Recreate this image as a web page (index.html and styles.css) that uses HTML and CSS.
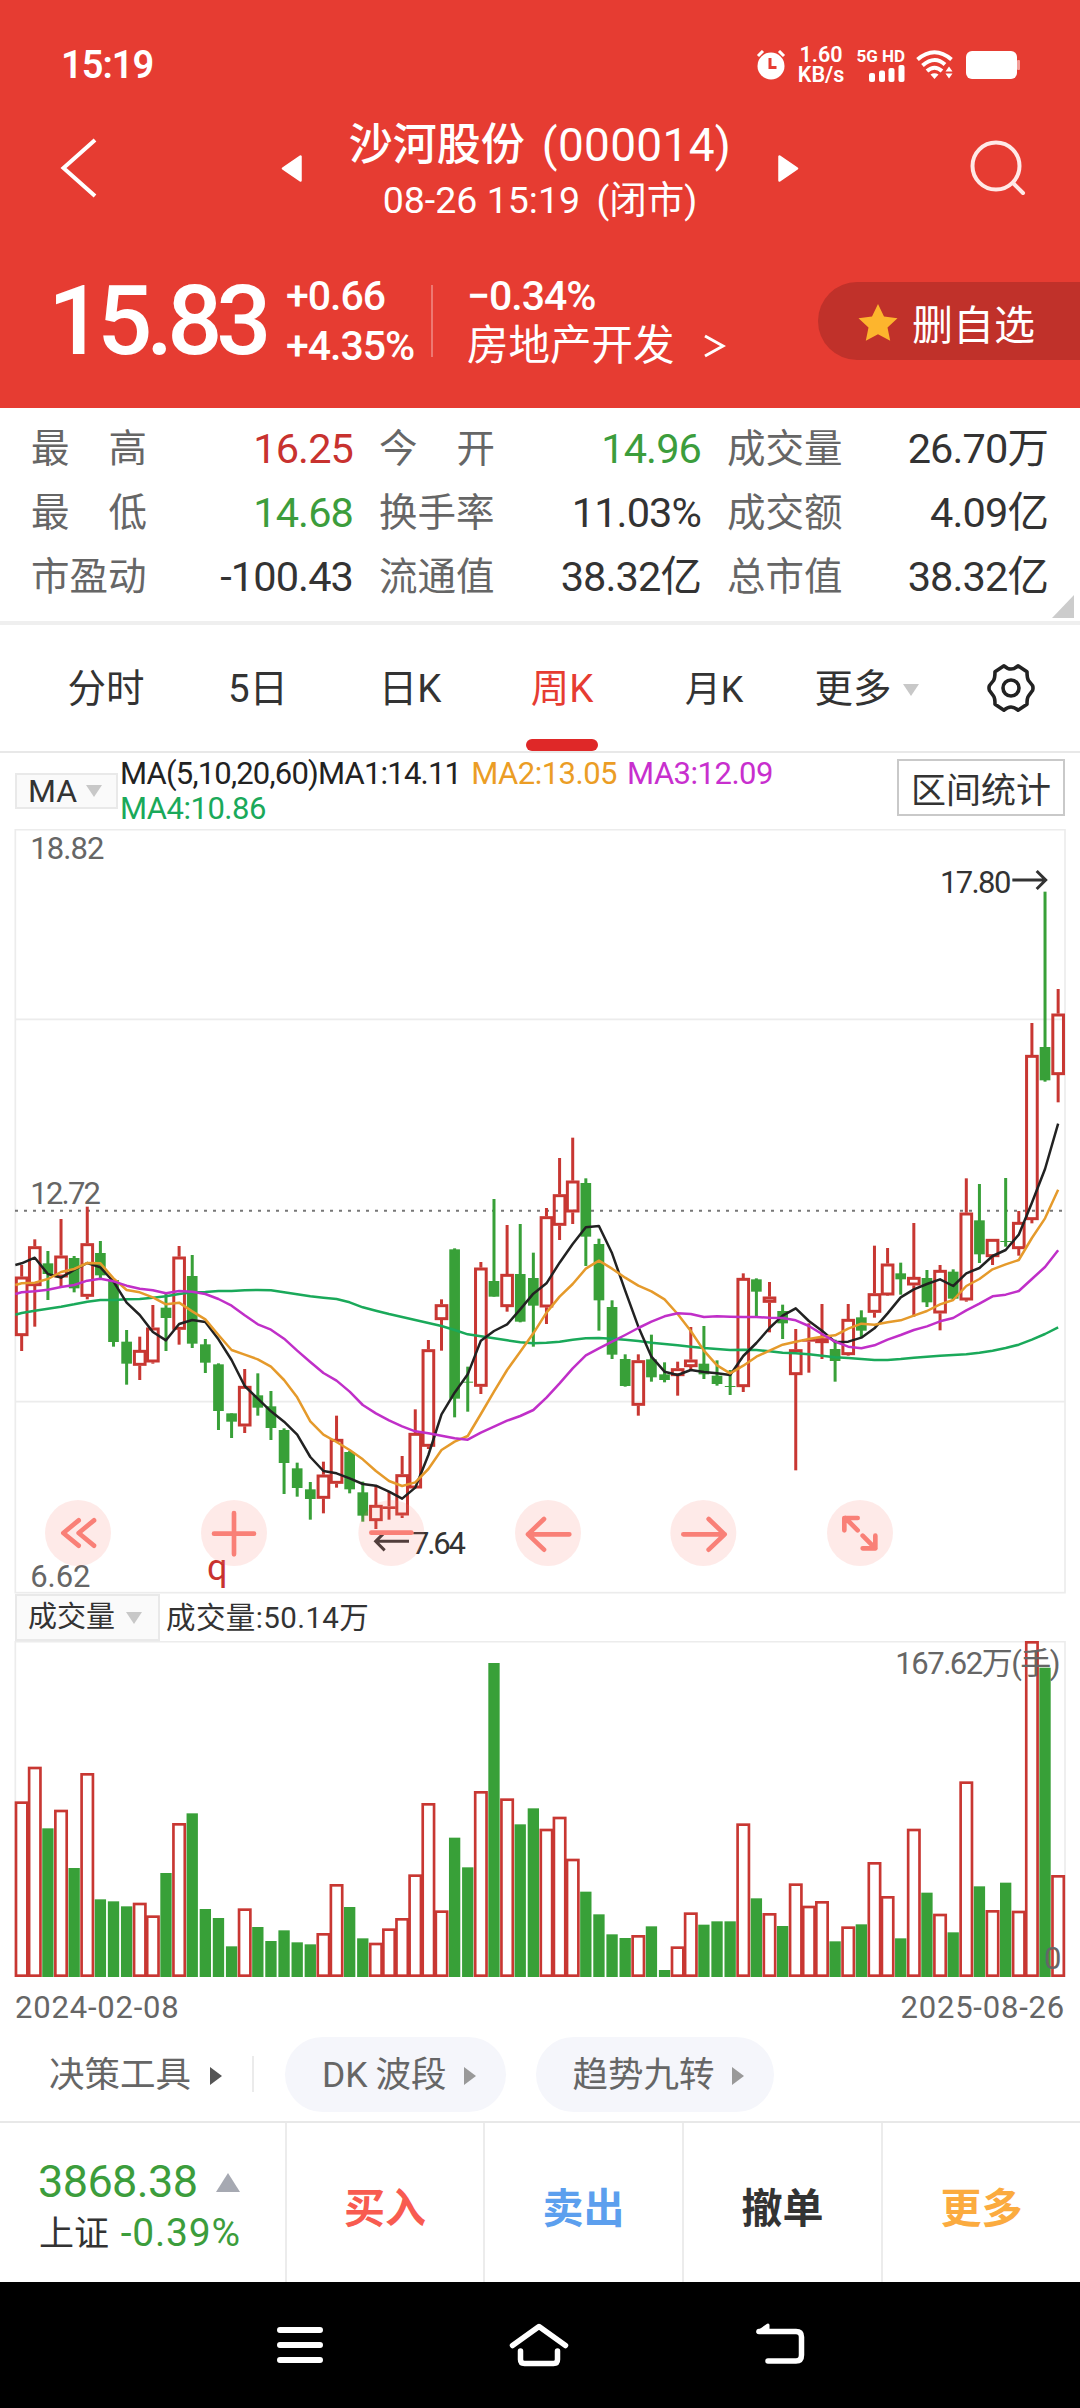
FILE: index.html
```html
<!DOCTYPE html>
<html lang="zh-CN">
<head>
    <meta charset="UTF-8">
    <title>沙河股份 (000014)</title>
    <link rel="stylesheet" href="styles.css">
</head>
<body>
    <header class="header">
        <div class="status-bar">
            <span class="clock">15:19</span>
            <div class="status-icons">
                <svg class="alarm" width="30" height="30" viewBox="0 0 30 30">
                    <circle cx="15" cy="16" r="13.5" fill="#fff"/>
                    <path d="M2 6l5-5M28 6l-5-5" stroke="#fff" stroke-width="3"/>
                    <path d="M14 8v9.500h6.500" fill="none" stroke="#e63c32" stroke-width="3"/>
                </svg>
                <div class="speed"><span>1.60</span><span>KB/s</span></div>
                <div class="signal">
                    <span>5G HD</span>
                    <svg width="36" height="17" viewBox="0 0 36 17" fill="#fff">
                        <rect x="0" y="8" width="6" height="9" rx="2"/>
                        <rect x="10" y="5.500" width="6" height="11.500" rx="2"/>
                        <rect x="19.500" y="3" width="6" height="14" rx="2"/>
                        <rect x="29.500" y="0" width="6" height="17" rx="2"/>
                    </svg>
                </div>
                <svg class="wifi" width="38" height="30" viewBox="0 0 38 30" fill="none" stroke="#fff" stroke-width="4">
                    <path d="M1.500 9.500Q18.500-5 35.500 9.500"/>
                    <path d="M6.500 15.500Q18.500 5 29 14.500"/>
                    <path d="M11 21Q18.500 14.500 26 21"/>
                    <path d="M14.500 24.500q4-2.500 8 0l-4 4.500z" fill="#fff" stroke="none"/>
                    <path d="M29.500 21.500l3.500-5 3.500 5zM29.500 23.500l3.500 5 3.500-5z" fill="#fff" stroke="none"/>
                </svg>
                <svg class="battery" width="54" height="28" viewBox="0 0 54 28" fill="#fff">
                    <rect x="0" y="0" width="51" height="28" rx="6"/>
                    <rect x="51" y="9" width="3" height="10" rx="1" opacity=".5"/>
                </svg>
            </div>
        </div>

        <div class="title-bar">
            <svg class="back" width="38" height="62" viewBox="0 0 38 62"><path d="M35 3L3.500 31 35 59" fill="none" stroke="#fff" stroke-width="4"/></svg>
            <svg class="prev" width="21" height="27" viewBox="0 0 21 27"><path d="M19.500 1.500v24L2 13.500z" fill="#fff" stroke="#fff" stroke-width="2.500" stroke-linejoin="round"/></svg>
            <div class="title">
                <h1><b>沙河股份</b><span>(000014)</span></h1>
                <p>08-26 15:19 <span>(闭市)</span></p>
            </div>
            <svg class="next" width="21" height="27" viewBox="0 0 21 27"><path d="M1.500 1.500v24L19 13.500z" fill="#fff" stroke="#fff" stroke-width="2.500" stroke-linejoin="round"/></svg>
            <svg class="search" width="56" height="56" viewBox="0 0 56 56" fill="none" stroke="#ffe9e7" stroke-width="4"><circle cx="26" cy="26" r="23.500"/><path d="M43.500 43.500l9.500 9.500" stroke-linecap="round"/></svg>
        </div>

        <div class="quote">
            <span class="price">15.83</span>
            <div class="change"><span>+0.66</span><span>+4.35%</span></div>
            <div class="sector">
                <span class="sector-change">−0.34%</span>
                <span class="sector-name">房地产开发<svg width="22" height="24" viewBox="0 0 22 24"><path d="M1 2l18 10L1 22" fill="none" stroke="#fff" stroke-width="3"/></svg></span>
            </div>
            <button class="favorite">
                <svg width="40" height="38" viewBox="0 0 40 38"><path d="M20 1l6 12.500 13.500 1.700-10 9.400 2.700 13.200L20 31.300 7.800 37.800l2.700-13.200-10-9.400L14 13.500z" fill="#fdb52d"/></svg>
                删自选
            </button>
        </div>
    </header>

    <section class="stats">
        <div class="stat"><span class="label"><i>最</i><i>高</i></span><span class="value up">16.25</span></div>
        <div class="stat"><span class="label"><i>今</i><i>开</i></span><span class="value down">14.96</span></div>
        <div class="stat"><span class="label">成交量</span><span class="value">26.70万</span></div>
        <div class="stat"><span class="label"><i>最</i><i>低</i></span><span class="value down">14.68</span></div>
        <div class="stat"><span class="label">换手率</span><span class="value">11.03%</span></div>
        <div class="stat"><span class="label">成交额</span><span class="value">4.09亿</span></div>
        <div class="stat"><span class="label">市盈动</span><span class="value">-100.43</span></div>
        <div class="stat"><span class="label">流通值</span><span class="value">38.32亿</span></div>
        <div class="stat"><span class="label">总市值</span><span class="value">38.32亿</span></div>
        <span class="corner"></span>
    </section>

    <nav class="tabs">
        <a>分时</a>
        <a>5日</a>
        <a>日K</a>
        <a class="active">周K</a>
        <a class="small">月K</a>
        <a class="more">更多<span class="caret"></span></a>
        <a class="settings">
            <svg width="52" height="52" viewBox="0 0 52 52" fill="none" stroke="#222" stroke-width="3.600" stroke-linejoin="round">
                <path d="M19 3.800Q22.500 7 26 7T33 3.800L42 9.800Q42 16 43.500 18.500L47.500 23.500Q48.500 26 47.500 28.500L43.500 34Q42 36 42 42.200L33 48.200Q29.500 45 26 45T19 48.200L10 42.200Q10 36 8.500 34L4.500 28.500Q3.500 26 4.500 23.500L8.500 18.500Q10 16 10 9.800Z"/>
                <circle cx="26" cy="26" r="8"/>
            </svg>
        </a>
    </nav>

    <section class="indicator">
        <div class="select ma-select">MA<span class="caret"></span></div>
        <div class="ma-values">
            <div><span class="ma1">MA(5,10,20,60)MA1:14.11</span><span class="ma2">MA2:13.05</span><span class="ma3">MA3:12.09</span></div>
            <div><span class="ma4">MA4:10.86</span></div>
        </div>
        <button class="range-btn">区间统计</button>
    </section>

    <section class="kline">
        <svg id="kline" width="1080" height="765" viewBox="0 0 3240 2295"></svg>
    </section>

    <section class="volume-head">
        <div class="select">成交量<span class="caret"></span></div>
        <span class="volume-value">成交量:50.14万</span>
    </section>
    <section class="volume">
        <svg id="volume" width="1080" height="337" viewBox="0 0 3240 1011"></svg>
    </section>
    <div class="dates"><span>2024-02-08</span><span>2025-08-26</span></div>

    <section class="tools">
        <span class="tool-main">决策工具<span class="arrow dark"></span></span>
        <span class="pill">DK<span class="cjk">波段</span><span class="arrow"></span></span>
        <span class="pill">趋势九转<span class="arrow"></span></span>
    </section>

    <footer class="actions">
        <div class="index">
            <div class="index-value">3868.38<span class="tri-up"></span></div>
            <div class="index-change">上证 <span>-0.39%</span></div>
        </div>
        <a class="buy">买入</a>
        <a class="sell">卖出</a>
        <a class="cancel">撤单</a>
        <a class="other">更多</a>
    </footer>

    <div class="system-nav">
        <svg width="46" height="44" viewBox="0 0 46 44" stroke="#fff" stroke-width="6" stroke-linecap="round"><path d="M3 7h40M3 22h40M3 37h40"/></svg>
        <svg width="60" height="46" viewBox="0 0 60 46" fill="none" stroke="#fff" stroke-width="5.500" stroke-linecap="round" stroke-linejoin="round"><path d="M3.500 23.500L30 4.500l26.500 19M11.500 29v8.500q0 4 4 4h29q4 0 4-4V29"/></svg>
        <svg width="50" height="44" viewBox="0 0 50 44" fill="none" stroke="#fff" stroke-width="5.500" stroke-linecap="round"><path d="M4 8.500h37q5.500 0 5.500 5.500v18q0 6-5.500 6H13"/><path d="M3 9L13 2v7z" fill="#fff" stroke-width="3" stroke-linejoin="round"/></svg>
    </div>

    <script src="chart.js"></script>
</body>
</html>
```
FILE: styles.css
```css
* {
    box-sizing: border-box;
}
body {
    margin: 0;
    width: 1080px;
    background: #fff;
    color: #333;
    font-family: Roboto, "Noto Sans CJK SC", sans-serif;
    font-size: 38px;
    line-height: 1;
}
h1, p {
    margin: 0;
    font-weight: normal;
}
i {
    font-style: normal;
}
svg {
    display: block;
    flex: none;
}
button {
    font-family: inherit;
    padding: 0;
}

/* Red header */
.header {
    height: 408px;
    background: #e63c32;
    color: #fff;
}
.status-bar {
    height: 108px;
    padding: 21px 60px 0 61px;
    display: flex;
    align-items: center;
    justify-content: space-between;
}
.clock {
    font-size: 38px;
    font-weight: 600;
    letter-spacing: -1px;
}
.status-icons {
    display: flex;
    align-items: center;
}
.speed {
    display: flex;
    flex-direction: column;
    align-items: center;
    width: 46px;
    margin-left: 12px;
    font-size: 21.5px;
    line-height: 20px;
    font-weight: 600;
}
.signal {
    display: flex;
    flex-direction: column;
    align-items: flex-end;
    width: 50px;
    margin: 0 11px 0 11px;
    font-size: 17px;
    font-weight: 700;
    white-space: nowrap;
}
.wifi {
    margin-right: 12px;
}
.title-bar {
    height: 120px;
    padding: 0 54px 0 60px;
    display: flex;
    align-items: center;
    justify-content: space-between;
}
.title {
    width: 476px;
    text-align: center;
}
.title h1 {
    display: flex;
    justify-content: center;
    gap: 17px;
    font-size: 44px;
    line-height: 64px;
}
.title h1 b {
    font-weight: 500;
}
.title h1 span {
    font-size: 46px;
    letter-spacing: 0.3px;
}
.title p {
    font-size: 37.5px;
    line-height: 46px;
    white-space: nowrap;
}
.title p span {
    margin-left: 7px;
}
.back {
    margin-right: 183px;
}
.search {
    margin-left: 171px;
}
.quote {
    height: 180px;
    padding: 6px 0 0 48px;
    display: flex;
    align-items: center;
}
.price {
    width: 230px;
    font-size: 97px;
    font-weight: 500;
    letter-spacing: -6px;
}
.change {
    width: 147px;
    height: 72px;
    margin-left: 8px;
    border-right: 2px solid #ee7871;
    display: flex;
    flex-direction: column;
    justify-content: center;
    font-size: 41px;
    line-height: 50px;
    font-weight: 500;
    letter-spacing: -1px;
}
.sector {
    flex: 1;
    padding-left: 34px;
    font-size: 41.5px;
    line-height: 50px;
}
.sector span {
    display: flex;
    align-items: center;
}
.sector-change {
    font-size: 41px;
    font-weight: 500;
    letter-spacing: -1px;
}
.sector svg {
    margin-left: 29px;
}
.favorite {
    width: 262px;
    height: 78px;
    padding: 2px 0 0 40px;
    display: flex;
    align-items: center;
    gap: 14px;
    border: 0;
    border-radius: 39px 0 0 39px;
    background: #c0312a;
    color: #fff;
    font-size: 41px;
}

/* Quote figures */
.stats {
    position: relative;
    height: 217px;
    padding: 9px 32px 0 31px;
    display: grid;
    grid-template-columns: 322px 322px 321px;
    grid-auto-rows: 64px;
    column-gap: 26px;
    border-bottom: 4px solid #efefef;
}
.stat {
    display: flex;
    justify-content: space-between;
    align-items: center;
}
.label {
    width: 116px;
    display: flex;
    justify-content: space-between;
    color: #666;
    font-size: 38.5px;
}
.value {
    font-size: 41.5px;
    letter-spacing: -0.9px;
}
.up {
    color: #c8322f;
}
.down {
    color: #3c9d3c;
}
.corner {
    position: absolute;
    right: 6px;
    bottom: 3px;
    border-left: 22px solid transparent;
    border-bottom: 23px solid #ccc;
}

/* Period tabs */
.tabs {
    height: 128px;
    padding: 0 0 0 30px;
    display: grid;
    grid-template-columns: repeat(5, 152px) 148px 1fr;
    border-bottom: 2px solid #e8e8e8;
}
.tabs a {
    position: relative;
    display: flex;
    align-items: center;
    justify-content: center;
    padding-top: 3px;
    font-size: 38.5px;
}
.tabs .small {
    font-size: 36px;
}
.tabs .active {
    color: #e63c32;
}
.tabs .active::after {
    content: "";
    position: absolute;
    bottom: 0;
    left: 40px;
    width: 72px;
    height: 12px;
    border-radius: 6px;
    background: #df2828;
}
.tabs .more {
    padding-left: 5px;
}
.tabs .settings {
    padding: 0 0 0 4px;
}
.caret {
    margin-left: 11px;
    border: 8.5px solid transparent;
    border-top: 12px solid #c8c8c8;
    border-bottom: 0;
}

/* Indicator line */
.indicator {
    height: 76px;
    padding: 6px 15px 0 15px;
    display: flex;
    align-items: flex-start;
}
.select {
    display: flex;
    align-items: center;
    border: 2px solid #e9e9e9;
    background: #fafafa;
    font-size: 29px;
    padding-left: 11px;
}
.ma-select {
    width: 103px;
    height: 36px;
    margin-top: 14px;
    font-size: 32px;
}
.ma-select .caret {
    margin-left: 9px;
}
.ma-values {
    flex: 1;
    margin-top: -3px;
    padding-left: 2px;
    font-size: 31px;
    line-height: 35px;
    letter-spacing: -0.8px;
    white-space: nowrap;
}
.ma-values div {
    display: flex;
    gap: 10px;
}
.ma1 { color: #222; }
.ma2 { color: #eb9d25; }
.ma3 { color: #c82fce; }
.ma4 { color: #1aa95a; }
.ma2, .ma3, .ma4 {
    letter-spacing: -0.5px;
}
.range-btn {
    width: 168px;
    height: 57px;
    border: 2px solid #c9c9c9;
    background: #fff;
    color: #333;
    font-size: 35px;
}

/* Charts */
.kline {
    height: 765px;
}
.volume-head {
    height: 47px;
    padding-left: 15px;
    display: flex;
    align-items: center;
    gap: 6px;
    font-size: 29.5px;
}
.volume-head .select {
    width: 145px;
    height: 47px;
}
.volume-value {
    padding-top: 2px;
    letter-spacing: 0.4px;
}
.volume {
    height: 337px;
}
#kline text, #volume text {
    font-family: Roboto, "Noto Sans CJK SC", sans-serif;
    font-size: 93px;
    fill: #666;
}
#kline .mark {
    fill: #333;
}
#kline .signal-mark {
    fill: #c8322f;
    font-size: 108px;
}
.dates {
    height: 59px;
    padding: 14px 15px 0;
    display: flex;
    justify-content: space-between;
    color: #666;
    font-size: 31px;
    letter-spacing: 0.8px;
}

/* Decision tools */
.tools {
    height: 84px;
    display: flex;
    align-items: flex-start;
    color: #666;
    font-size: 35.500px;
}
.tools > span {
    height: 75px;
    padding-top: 3px;
    display: flex;
    align-items: center;
}
.tools .tool-main {
    width: 285px;
    padding-left: 49px;
    background: linear-gradient(#ebebeb, #ebebeb) 252px 19px / 2px 36px no-repeat;
}
.tools .pill {
    margin-right: 30px;
    padding: 3px 30px 0 37px;
    border-radius: 38px;
    background: #f5f6fb;
}
.pill .cjk {
    margin-left: 8px;
}
.arrow {
    margin-left: 17px;
    border: 9px solid transparent;
    border-left: 12px solid #999;
    border-right: 0;
}
.arrow.dark {
    margin-left: 19px;
    border-left-color: #555;
}

/* Trade bar */
.actions {
    height: 161px;
    display: grid;
    grid-template-columns: 285px 198px 199px 199px 1fr;
    border-top: 2px solid #e8e8e8;
}
.actions a {
    display: flex;
    align-items: center;
    justify-content: center;
    padding-top: 13px;
    border-left: 2px solid #ececec;
    font-size: 41px;
    font-weight: 700;
}
.buy { color: #f85b50; }
.sell { color: #5c9fee; }
.cancel { color: #333; }
.other { color: #fbab3f; }
.index {
    padding: 33px 0 0 38px;
}
.index-value {
    display: flex;
    align-items: center;
    color: #3c9d3c;
    font-size: 45px;
    line-height: 52px;
    letter-spacing: -0.6px;
}
.tri-up {
    margin-left: 19px;
    border: 12px solid transparent;
    border-bottom: 19px solid #a6a9b2;
    border-top: 0;
}
.index-change {
    margin-top: 2px;
    padding-left: 1px;
    font-size: 35px;
    line-height: 46px;
}
.index-change span {
    margin-left: 3px;
    color: #3c9d3c;
    font-size: 39px;
    letter-spacing: 0.8px;
}
.system-nav {
    height: 126px;
    padding: 0 275px 0 277px;
    display: flex;
    align-items: center;
    justify-content: space-between;
    background: #000;
}
```
FILE: chart.js
```js
const RED = '#c83732';
const GREEN = '#38a038';
const STEP = 39.36;
const FIRST = 65;

// weekly candles: [direction, high, body top, body bottom, low], counted from the block's base line
const candleBlocks = [
    [963, [
        ['r', 345, 380, 558, 603], ['r', 268, 289, 408, 530], ['g', 303, 340, 372, 450], ['r', 207, 317, 382, 410],
        ['g', 318, 324, 415, 427], ['r', 170, 280, 440, 448], ['g', 273, 309, 376, 386], ['g', 385, 390, 576, 590],
        ['g', 540, 575, 641, 704], ['r', 560, 600, 647, 690], ['r', 465, 533, 637, 641], ['g', 430, 473, 504, 603],
        ['r', 288, 320, 539, 584], ['g', 315, 378, 581, 594], ['g', 567, 583, 638, 669], ['g', 640, 643, 783, 840],
        ['g', 790, 790, 815, 864], ['r', 657, 708, 829, 849], ['g', 670, 736, 773, 797], ['g', 723, 769, 834, 870],
        ['g', 835, 840, 939, 1032], ['g', 938, 955, 1014, 1040], ['g', 996, 1018, 1047, 1109], ['r', 935, 974, 1046, 1090],
        ['r', 797, 867, 1001, 1013], ['g', 903, 906, 1018, 1030]
    ]],
    [873, [
        ['g', 1085, 1117, 1187, 1205], ['r', 1097, 1155, 1203, 1227], ['r', 1115, 1159, 1167, 1199], ['r', 1008, 1063, 1186, 1194],
        ['r', 868, 939, 1105, 1105], ['r', 660, 688, 980, 987], ['r', 538, 553, 600, 692], ['g', 385, 388, 836, 892],
        ['g', 740, 785, 788, 875], ['r', 426, 443, 800, 822], ['g', 237, 483, 530, 530], ['r', 315, 462, 561, 575],
        ['g', 312, 462, 605, 607], ['g', 398, 474, 557, 680], ['r', 264, 289, 562, 612], ['r', 114, 223, 317, 360],
        ['r', 53, 182, 277, 312], ['g', 175, 189, 350, 438], ['g', 356, 372, 541, 632], ['g', 541, 561, 704, 717],
        ['g', 703, 717, 798, 800], ['r', 703, 721, 857, 887], ['g', 644, 718, 772, 785], ['g', 727, 763, 780, 787],
        ['r', 725, 745, 768, 827], ['r', 621, 719, 741, 750], ['g', 618, 731, 763, 777]
    ]],
    [1053, [
        ['g', 541, 587, 612, 617], ['g', 570, 618, 621, 645], ['r', 280, 294, 621, 636], ['g', 295, 298, 335, 408],
        ['r', 306, 350, 368, 457], ['g', 374, 393, 430, 477], ['r', 447, 508, 585, 871], ['r', 430, 477, 485, 578],
        ['r', 372, 475, 489, 537], ['g', 479, 507, 543, 605], ['r', 372, 417, 525, 527], ['g', 391, 412, 452, 472],
        ['r', 197, 340, 398, 413], ['r', 204, 251, 346, 348], ['g', 248, 280, 298, 344], ['r', 129, 291, 316, 410],
        ['g', 270, 294, 367, 381], ['r', 255, 270, 400, 451], ['g', 268, 275, 356, 360], ['r', -5, 98, 361, 365],
        ['g', 12, 121, 223, 249], ['r', 177, 177, 231, 255], ['g', -6, 183, 186, 200], ['r', 93, 126, 207, 227],
        ['r', -471, -375, 120, 130], ['g', -865, -399, -299, -295], ['r', -573, -499, -315, -233]
    ]]
];

const averages = [
    { color: '#1aa95a', blocks: [
        [963, [489, 482, 476, 470, 463, 455, 450, 450, 448, 447, 443, 439, 432, 427, 426, 423, 423, 421, 420, 421, 427, 433, 439, 443, 447, 457]],
        [873, [562, 572, 582, 591, 600, 609, 618, 630, 643, 649, 655, 661, 667, 670, 668, 665, 659, 655, 654, 656, 659, 663, 668, 672, 676, 680, 684]],
        [1053, [507, 510, 509, 510, 514, 518, 520, 523, 527, 532, 534, 537, 540, 540, 537, 533, 530, 527, 525, 523, 518, 512, 504, 494, 479, 462, 442]]
    ] },
    { color: '#222', blocks: [
        [963, [340, 323, 372, 383, 360, 339, 352, 395, 458, 495, 546, 571, 522, 510, 516, 568, 630, 708, 746, 784, 815, 854, 921, 963, 970, 985]],
        [873, [1092, 1097, 1115, 1136, 1103, 1005, 883, 818, 763, 662, 633, 613, 568, 521, 490, 428, 372, 322, 318, 400, 512, 620, 710, 755, 765, 750, 756]],
        [1053, [580, 585, 528, 489, 444, 407, 385, 423, 452, 486, 485, 473, 445, 400, 352, 328, 312, 298, 318, 280, 264, 228, 210, 164, 68, -33, -169]]
    ] },
    { color: '#e59a2b', blocks: [
        [963, [400, 398, 387, 366, 357, 339, 340, 385, 420, 427, 442, 463, 458, 484, 508, 555, 600, 614, 628, 650, 690, 742, 814, 854, 876, 900]],
        [873, [1018, 1053, 1083, 1098, 1087, 1047, 990, 965, 948, 882, 815, 750, 695, 640, 578, 530, 492, 446, 422, 446, 473, 497, 514, 538, 582, 633, 692]],
        [1053, [556, 580, 557, 530, 512, 494, 485, 477, 470, 466, 446, 431, 434, 427, 421, 407, 393, 373, 360, 318, 297, 268, 253, 240, 174, 115, 29]]
    ] },
    { color: '#c02fc8', blocks: [
        [963, [427, 424, 419, 411, 405, 392, 386, 394, 407, 416, 421, 430, 423, 425, 432, 447, 467, 496, 523, 539, 566, 602, 636, 669, 692, 725]],
        [873, [855, 880, 901, 919, 934, 940, 947, 955, 959, 938, 920, 902, 888, 870, 833, 790, 745, 706, 685, 665, 645, 624, 605, 589, 580, 582, 591]],
        [1053, [409, 410, 411, 411, 413, 414, 421, 438, 462, 485, 500, 505, 496, 479, 465, 450, 439, 424, 414, 391, 371, 349, 344, 333, 297, 261, 211]]
    ] }
];

const volumeTops = [
    664, 560, 745, 689, 864, 579, 958, 964, 979, 968, 1006, 879, 729, 700, 987, 1014, 1099, 985, 1041, 1083,
    1051, 1087, 1093, 1059, 912, 981, 1075, 1088, 1045, 1014, 883, 669, 991, 773, 862, 633, 249, 655, 733, 685,
    746, 710, 836, 935, 1003, 1063, 1074, 1065, 1039, 1170, 1099, 997, 1034, 1024, 1024, 730, 955, 999, 1038, 910,
    977, 963, 1084, 1039, 1033, 846, 948, 1075, 746, 938, 1001, 1057, 604, 919, 990, 908, 992, 183, 263, 885
];

const x = i => FIRST + i * STEP;
const rect = (cx, w, top, bottom, attrs) =>
    `<rect x="${cx - w / 2}" y="${top}" width="${w}" height="${bottom - top}" ${attrs}/>`;

// price chart
const candles = candleBlocks.flatMap(([base, rows]) =>
    rows.map(([dir, ...v]) => [dir, ...v.map(n => n + base)]));

let price = `
    <path d="M45 571H3195M45 1718H3195" stroke="#ececec" stroke-width="5"/>
    <rect x="46" y="2" width="3149" height="2289" fill="none" stroke="#ececec" stroke-width="5"/>
    <path d="M45 1145H3190" stroke="#777" stroke-width="6" stroke-dasharray="9 18"/>
    <text x="91" y="91" textLength="222">18.82</text>
    <text x="91" y="1124" textLength="212">12.72</text>
    <text x="91" y="2273" textLength="180">6.62</text>`;

candles.forEach(([dir, high, top, bottom, low], i) => {
    if (dir === 'r') {
        price += rect(x(i), 9, high, top, `fill="${RED}"`) + rect(x(i), 9, bottom, low, `fill="${RED}"`);
        if (bottom - top < 10) {
            price += rect(x(i), 40, top, bottom, `fill="${RED}"`);
        } else {
            price += rect(x(i), 32, top + 4, bottom - 4, `fill="none" stroke="${RED}" stroke-width="9"`);
        }
    } else {
        price += rect(x(i), 9, high, low, `fill="${GREEN}"`) + rect(x(i), 32, top, bottom, `fill="${GREEN}"`);
    }
});

averages.forEach(({ color, blocks }) => {
    const ys = blocks.flatMap(([base, v]) => v.map(n => n + base));
    const points = ys.map((y, i) => `${x(i)},${y}`).join(' ');
    price += `<polyline points="46,${ys[0] + 5} ${points}" fill="none" stroke="${color}" stroke-width="7.5" stroke-linejoin="round"/>`;
});

price += `
    <text class="mark" x="2820" y="192" textLength="214">17.80</text>
    <path d="M3037 153h98M3110 126l27 27-27 27" fill="none" stroke="#333" stroke-width="9"/>
    <text class="mark" x="1236" y="2175" textLength="162">7.64</text>
    <path d="M1227 2137h-98M1154 2110l-27 27 27 27" fill="none" stroke="#333" stroke-width="9"/>
    <text class="signal-mark" x="621" y="2253">q</text>`;

// chart controls
const controls = [
    [234, 'M2-38l-46 38 46 38M48-38L2 0l46 38'],
    [702, 'M-60 2H60M0-60V64'],
    [1174, 'M-60-1H60'],
    [1644, 'M64 4H-60M-12-42L-60 4l48 46'],
    [2110, 'M-60 4H64M16-42L64 4 16 50'],
    [2580, 'M-7-8L-44-45M-47-8V-45H-7M8 8l38 38M46 8V46H8']
];
controls.forEach(([cx, d]) => {
    price += `<g transform="translate(${cx} 2112)">
        <circle r="99" fill="#f87c72" fill-opacity=".16"/>
        <path d="${d}" fill="none" stroke="#f98077" stroke-width="14" stroke-linecap="round" stroke-linejoin="round"/></g>`;
});
document.getElementById('kline').innerHTML = price;

// volume chart, shares direction with the candles
let volume = '<path d="M46 1008V2H3195V1008" fill="none" stroke="#ececec" stroke-width="5"/>';
volumeTops.forEach((v, i) => {
    const top = v - 183;
    volume += candles[i][0] === 'r'
        ? rect(x(i), 34, top + 4, 1004, `fill="#fff" stroke="${RED}" stroke-width="8"`)
        : rect(x(i), 34, top, 1008, `fill="${GREEN}"`);
});
volume += `
    <text x="2686" y="100" textLength="496">167.62万(手)</text>
    <text x="3132" y="984">0</text>`;
document.getElementById('volume').innerHTML = volume;
```
